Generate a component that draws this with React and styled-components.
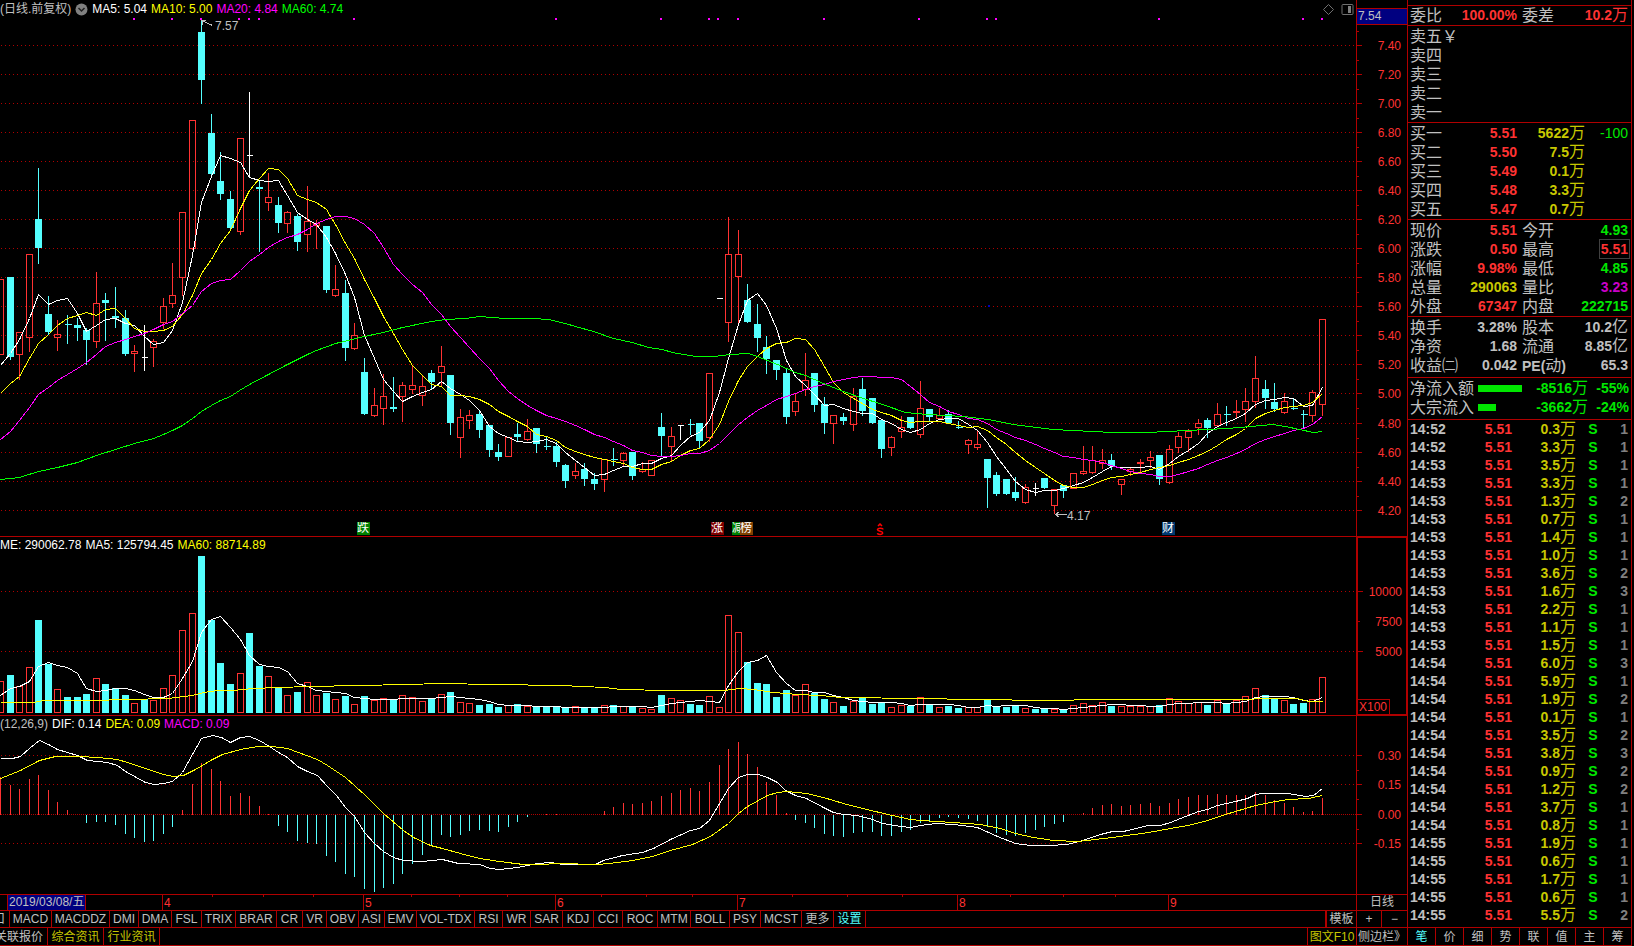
import React from 'react';
import styled, { createGlobalStyle, css } from 'styled-components';

const colors = {
  line: '#b00000',
  red: '#ff3232',
  cyan: '#54ffff',
  yellow: '#ffff00',
  gold: '#c8c800',
  magenta: '#ff00ff',
  purple: '#c800c8',
  green: '#00ff00',
  lime: '#00e600',
  white: '#ffffff',
  gray: '#c0c0c0',
  dim: '#808080',
  navy: '#000080',
  black: '#000000',
};

const GlobalStyle = createGlobalStyle`
  body {
    margin: 0;
    background: ${colors.black};
    color: ${colors.gray};
    font-family: 'Liberation Sans', 'Noto Sans CJK SC', sans-serif;
    font-size: 12px;
  }

  *, *::before, *::after {
    box-sizing: border-box;
  }
`;

/* ---------- data ---------- */

// kind (r up, c down, w flat), high, top, bottom, low
const CANDLES = [
  ['r', 279, 279, 354, 354], ['c', 276, 277, 357, 359], ['r', 332, 332, 354, 379], ['r', 254, 254, 337, 351],
  ['c', 167, 219, 248, 263], ['c', 295, 314, 332, 334], ['r', 319, 334, 337, 350], ['c', 314, 324, 325, 343],
  ['c', 317, 325, 328, 340], ['c', 327, 330, 340, 364], ['r', 271, 303, 341, 347], ['c', 292, 300, 303, 340],
  ['c', 286, 316, 318, 327], ['c', 309, 318, 354, 355], ['r', 344, 351, 353, 371], ['w', 324, 357, 357, 370],
  ['r', 338, 341, 347, 366], ['r', 297, 306, 322, 328], ['r', 262, 295, 303, 307], ['r', 212, 212, 277, 295],
  ['r', 120, 120, 248, 249], ['c', 20, 32, 80, 103], ['c', 113, 133, 174, 174], ['c', 151, 181, 194, 199],
  ['c', 190, 199, 228, 228], ['r', 138, 138, 231, 234], ['w', 91, 155, 155, 176], ['c', 180, 187, 189, 251],
  ['r', 172, 197, 202, 210], ['c', 196, 205, 223, 232], ['r', 210, 212, 223, 232], ['c', 213, 216, 242, 250],
  ['r', 185, 221, 234, 251], ['r', 219, 223, 225, 248], ['c', 226, 226, 290, 292], ['r', 264, 289, 295, 296],
  ['c', 279, 293, 348, 360], ['r', 322, 335, 348, 349], ['c', 357, 372, 414, 414], ['r', 387, 405, 415, 416],
  ['r', 373, 396, 408, 424], ['c', 376, 407, 409, 411], ['r', 381, 385, 396, 421], ['r', 365, 385, 389, 393],
  ['r', 374, 386, 395, 405], ['c', 369, 373, 382, 388], ['r', 345, 366, 372, 385], ['c', 375, 375, 423, 434],
  ['r', 408, 417, 437, 457], ['r', 409, 415, 420, 428], ['c', 410, 414, 430, 437], ['c', 425, 425, 450, 456],
  ['c', 443, 452, 457, 460], ['r', 437, 437, 456, 456], ['c', 422, 434, 437, 440], ['r', 418, 431, 439, 440],
  ['c', 428, 428, 444, 452], ['c', 436, 446, 447, 449], ['c', 441, 446, 462, 466], ['c', 463, 465, 481, 487],
  ['r', 462, 471, 475, 478], ['c', 462, 469, 479, 485], ['c', 472, 479, 484, 489], ['r', 459, 459, 479, 491],
  ['c', 447, 459, 460, 465], ['r', 451, 453, 460, 465], ['c', 452, 452, 476, 479], ['r', 461, 469, 471, 472],
  ['r', 460, 460, 475, 475], ['c', 412, 427, 436, 456], ['r', 426, 436, 446, 460], ['w', 425, 425, 425, 439],
  ['c', 418, 424, 425, 434], ['c', 423, 423, 441, 448], ['r', 373, 373, 437, 441], ['w', 298, 298, 298, 298],
  ['r', 216, 254, 322, 341], ['r', 229, 254, 276, 322], ['c', 283, 300, 322, 322], ['c', 303, 324, 338, 351],
  ['c', 335, 347, 359, 373], ['c', 360, 360, 370, 379], ['c', 368, 373, 417, 423], ['r', 393, 401, 411, 415],
  ['r', 352, 380, 389, 395], ['c', 373, 373, 405, 411], ['c', 396, 404, 423, 433], ['r', 415, 415, 423, 443],
  ['c', 412, 417, 421, 424], ['r', 387, 396, 424, 430], ['c', 377, 389, 411, 415], ['c', 398, 398, 423, 423],
  ['c', 418, 420, 449, 457], ['r', 435, 437, 447, 455], ['r', 415, 427, 431, 437], ['c', 417, 417, 428, 428],
  ['r', 380, 408, 434, 437], ['c', 409, 409, 417, 421], ['r', 407, 415, 418, 419], ['c', 409, 414, 423, 423],
  ['c', 420, 427, 428, 428], ['r', 438, 440, 444, 453], ['r', 430, 444, 447, 449], ['c', 459, 459, 478, 507],
  ['c', 471, 475, 494, 495], ['c', 479, 479, 494, 494], ['c', 476, 492, 498, 500], ['r', 483, 487, 502, 503],
  ['w', 482, 488, 488, 495], ['c', 478, 478, 488, 488], ['r', 489, 489, 505, 513], ['c', 485, 485, 491, 497],
  ['r', 473, 473, 488, 488], ['r', 445, 471, 473, 474], ['r', 445, 460, 472, 473], ['r', 448, 460, 463, 468],
  ['c', 453, 460, 466, 469], ['r', 479, 479, 484, 494], ['r', 466, 469, 471, 475], ['r', 458, 462, 463, 473],
  ['r', 450, 457, 460, 467], ['c', 455, 455, 479, 484], ['r', 444, 449, 482, 483], ['r', 431, 436, 447, 452],
  ['r', 428, 431, 437, 451], ['r', 418, 423, 427, 434], ['c', 417, 420, 428, 437], ['r', 402, 414, 425, 426],
  ['c', 405, 414, 415, 425], ['r', 399, 411, 412, 417], ['r', 387, 401, 409, 421], ['r', 355, 378, 401, 407],
  ['c', 379, 389, 398, 408], ['c', 382, 402, 409, 411], ['r', 392, 401, 412, 413], ['c', 398, 408, 409, 409],
  ['c', 409, 414, 415, 428], ['r', 389, 392, 415, 421], ['r', 319, 319, 404, 415],
];

const VOLUMES = [
  681, 675, 686, 667, 620, 664, 689, 697, 697, 694, 678, 684, 688, 695, 703, 699, 700, 688, 675, 630,
  613, 556, 620, 663, 684, 673, 633, 666, 676, 687, 695, 692, 682, 695, 693, 699, 696, 704, 696, 700,
  698, 699, 695, 697, 701, 698, 694, 692, 702, 703, 705, 704, 707, 705, 704, 706, 707, 707, 707, 707,
  706, 708, 708, 705, 705, 706, 707, 708, 709, 695, 698, 700, 704, 705, 696, 707, 615, 632, 662, 683,
  684, 697, 690, 695, 684, 693, 699, 702, 706, 701, 697, 704, 703, 707, 705, 706, 697, 705, 707, 706,
  708, 707, 707, 699, 707, 707, 706, 708, 709, 709, 709, 709, 705, 703, 705, 702, 706, 706, 706, 706,
  706, 705, 698, 701, 703, 702, 705, 700, 703, 700, 696, 688, 695, 699, 700, 704, 703, 699, 677,
];

// flat days whose volume bar is drawn as a rise
const FLAT_UP = [71, 75];

const MACD = [
  776, 784, 788, 778, 774, 789, 801, 809, 814, 822, 821, 821, 824, 833, 837, 841, 840, 833, 826, 809,
  783, 762, 768, 780, 795, 792, 795, 805, 813, 825, 831, 840, 842, 843, 855, 861, 873, 876, 888, 891,
  887, 883, 873, 863, 854, 845, 834, 836, 834, 830, 829, 830, 831, 826, 821, 816, 814, 813, 813, 814,
  814, 814, 814, 810, 806, 802, 803, 802, 800, 795, 792, 789, 787, 790, 781, 764, 748, 741, 753, 766,
  781, 794, 812, 819, 822, 827, 833, 835, 836, 832, 831, 831, 835, 835, 831, 829, 822, 820, 817, 816,
  817, 818, 820, 826, 832, 834, 835, 832, 829, 826, 823, 821, 814, 812, 807, 804, 803, 805, 804, 803,
  802, 805, 802, 798, 796, 794, 794, 793, 794, 794, 794, 791, 794, 799, 802, 806, 811, 810, 797,
];

const MA60 = '0,479 19,477 38,471 57,467 77,462 96,455 115,449 134,443 153,438 163,434 172,430 182,425 192,418 201,411 211,405 220,400 230,396 239,390 249,384 268,374 287,364 307,354 316,350 335,343 364,336 383,332 402,327 431,321 445,319 465,318 479,316 505,318 532,318 548,319 565,323 575,326 593,331 613,338 632,342 648,347 662,349 672,352 695,356 713,356 730,354 748,353 757,356 777,364 795,372 805,375 823,383 843,391 860,397 882,404 905,412 927,414 963,416 988,419 1013,424 1052,429 1113,432 1147,432 1187,430 1227,428 1250,426 1272,424 1285,426 1313,432 1322,431';

const VOL_MA60 = '0,702 33,702 43,700 90,700 128,699 167,698 192,695 203,692 217,690 233,690 253,688 277,687 310,686 358,685 407,684 440,683 493,684 560,685 605,687 620,689 667,690 723,690 740,688 753,689 773,692 797,694 820,695 840,697 920,698 972,699 1050,700 1097,699 1240,699 1267,698 1297,698 1308,701 1322,701';

const DIF = '0,758 12,758 20,756 30,747 39,740 48,744 57,749 77,755 87,760 107,762 117,765 125,771 145,782 154,784 163,783 172,781 182,772 192,754 201,738 212,735 221,737 230,742 240,737 249,736 259,740 269,746 278,752 287,757 297,766 307,771 317,775 327,786 336,795 345,807 354,816 364,832 374,843 383,851 393,857 403,860 422,861 442,859 458,863 460,863 479,864 490,868 499,869 517,867 537,863 550,862 563,864 595,864 603,860 622,855 642,852 653,848 670,839 690,830 699,828 709,820 718,805 728,788 738,777 747,774 758,774 767,777 777,782 785,790 795,795 806,798 823,807 833,812 843,814 857,815 872,819 882,823 900,826 910,827 920,825 935,823 953,824 977,827 997,836 1015,843 1030,845 1048,845 1067,844 1082,840 1100,834 1112,831 1123,831 1148,825 1160,825 1170,822 1180,818 1198,811 1207,809 1217,805 1235,801 1247,798 1255,794 1263,793 1288,793 1305,796 1313,795 1322,788';

const DEA = '0,778 20,770 39,760 55,756 80,756 97,757 117,759 127,762 145,768 163,774 173,776 183,775 193,770 202,765 212,759 222,754 240,749 257,746 272,746 287,748 298,752 317,759 327,765 345,777 365,795 383,813 403,830 413,837 430,845 442,848 460,853 479,858 499,861 523,864 540,864 557,863 598,864 617,862 632,860 652,856 670,850 692,844 710,836 728,823 738,813 747,806 767,795 777,792 787,791 806,793 823,797 843,803 862,808 892,815 910,819 920,820 953,822 980,824 1000,828 1015,833 1033,837 1053,840 1077,841 1112,837 1148,832 1170,828 1188,825 1207,820 1225,814 1255,805 1270,802 1288,799 1308,798 1322,795';

const SIGNALS = [134, 172, 201, 239, 249, 259, 354, 556, 661, 709, 718, 738, 824, 919, 987, 996, 1159, 1303, 1322];

const PRICE_TICKS = [
  [45, '7.40'], [74, '7.20'], [103, '7.00'], [132, '6.80'], [161, '6.60'], [190, '6.40'],
  [219, '6.20'], [248, '6.00'], [277, '5.80'], [306, '5.60'], [335, '5.40'], [364, '5.20'],
  [393, '5.00'], [423, '4.80'], [452, '4.60'], [481, '4.40'], [510, '4.20'],
];
const VOLUME_TICKS = [[591, '10000'], [621, '7500', true], [651, '5000']];
const MACD_TICKS = [[755, '0.30'], [784, '0.15'], [814, '0.00'], [843, '-0.15']];

const MONTHS = [[162, '4'], [363, '5'], [555, '6'], [737, '7'], [957, '8'], [1168, '9']];
const WEEKS = [212, 263, 313, 411, 459, 507, 601, 646, 692, 792, 847, 902, 1010, 1063, 1115];

const INDICATORS = [
  ['口', 10], ['MACD', 42], ['MACDDZ', 58], ['DMI', 29], ['DMA', 33], ['FSL', 30], ['TRIX', 34],
  ['BRAR', 41], ['CR', 26], ['VR', 24], ['OBV', 32], ['ASI', 26], ['EMV', 32], ['VOL-TDX', 58],
  ['RSI', 28], ['WR', 28], ['SAR', 32], ['KDJ', 31], ['CCI', 29], ['ROC', 35], ['MTM', 33],
  ['BOLL', 39], ['PSY', 31], ['MCST', 41], ['更多', 32], ['设置', 32],
];

const ASKS = ['卖五￥', '卖四', '卖三', '卖二', '卖一'];
const BIDS = [
  ['买一', '5.51', '5622万', '-100'],
  ['买二', '5.50', '7.5万'],
  ['买三', '5.49', '0.1万'],
  ['买四', '5.48', '3.3万'],
  ['买五', '5.47', '0.7万'],
];

const QUOTES = [
  ['现价', '5.51', 'red', '今开', '4.93', 'lime'],
  ['涨跌', '0.50', 'red', '最高', '5.51', 'red', true],
  ['涨幅', '9.98%', 'red', '最低', '4.85', 'lime'],
  ['总量', '290063', 'gold', '量比', '3.23', 'purple'],
  ['外盘', '67347', 'red', '内盘', '222715', 'lime'],
];

const FINANCE = [
  ['换手', '3.28%', 'gray', '股本', '10.2亿', 'gray'],
  ['净资', '1.68', 'gray', '流通', '8.85亿', 'gray'],
  ['收益㈡', '0.042', 'gray', 'PE(动)', '65.3', 'gray'],
];

const FLOWS = [
  ['净流入额', 44, '-8516万', '-55%'],
  ['大宗流入', 18, '-3662万', '-24%'],
];

const TRADES = [
  ['14:52', '0.3', 1], ['14:52', '3.3', 1], ['14:53', '3.5', 1], ['14:53', '3.3', 1], ['14:53', '1.3', 2],
  ['14:53', '0.7', 1], ['14:53', '1.4', 1], ['14:53', '1.0', 1], ['14:53', '3.6', 2], ['14:53', '1.6', 3],
  ['14:53', '2.2', 1], ['14:53', '1.1', 1], ['14:53', '1.5', 1], ['14:54', '6.0', 3], ['14:54', '5.9', 1],
  ['14:54', '1.9', 2], ['14:54', '0.1', 1], ['14:54', '3.5', 2], ['14:54', '3.8', 3], ['14:54', '0.9', 2],
  ['14:54', '1.2', 2], ['14:54', '3.7', 1], ['14:54', '0.8', 1], ['14:55', '1.9', 1], ['14:55', '0.6', 1],
  ['14:55', '1.7', 1], ['14:55', '0.6', 1], ['14:55', '5.5', 2],
];

const SIDE_TABS = ['笔', '价', '细', '势', '联', '值', '主', '筹'];

/* ---------- chart helpers ---------- */

const PLOT_WIDTH = 1356;
const STEP = 9.58;
const xOf = (i) => Math.round(i * STEP);
const percent = (x) => `${(x / PLOT_WIDTH) * 100}%`;

// moving average; `lead` holds the values before a full window is available
function averageLine(values, size, lead) {
  return values
    .map((_, i) => {
      if (i < size - 1) return `${xOf(i)},${lead[i]}`;
      const sum = values.slice(i - size + 1, i + 1).reduce((a, b) => a + b, 0);
      return `${xOf(i)},${Math.round(sum / size)}`;
    })
    .join(' ');
}

const closes = CANDLES.map(([kind, , top, bottom]) => (kind === 'c' ? bottom - 1 : top));
const MA5 = averageLine(closes, 5, [365, 353, 339, 318]);
const MA10 = averageLine(closes, 10, [393, 383, 376, 358, 343, 334, 325, 318, 315]);
const MA20 = averageLine(closes, 20, [
  439, 431, 420, 407, 394, 387, 380, 374, 368, 362, 354, 346, 342, 339, 336, 333, 329, 324, 321,
]);
const VOL_MA5 = averageLine(VOLUMES, 5, [695, 688, 686, 681]);

/* ---------- layout ---------- */

const Page = styled.div`
  display: flex;
  align-items: stretch;
  border-bottom: 1px solid #e8e8e8;
  line-height: 16px;
`;

const Main = styled.main`
  flex: 1;
  min-width: 0;
`;

const Row = styled.section`
  display: flex;
  border-bottom: 1px solid ${colors.line};
`;

const Plot = styled.div`
  position: relative;
  flex: 1;
  min-width: 0;
`;

const Svg = styled.svg`
  display: block;
  width: 100%;
  shape-rendering: crispEdges;
`;

const Axis = styled.div`
  display: flex;
  flex-direction: column;
  flex: 0 0 51px;
  border-left: 1px solid ${colors.line};

  ${({ $selected }) => $selected && css`
    border: 1px solid ${colors.line};
    border-left-width: 2px;
  `}

  text {
    fill: ${colors.red};
    font-size: 12px;
    text-anchor: end;
  }
`;

const LastPrice = styled.div`
  margin-top: 8px;
  height: 17px;
  padding-left: 1px;
  border: solid ${colors.line};
  border-width: 1px 0;
  background: ${colors.navy};
  line-height: 15px;
`;

const UnitBox = styled.div`
  width: 32px;
  height: 15px;
  margin-top: auto;
  padding-left: 1px;
  border: solid ${colors.line};
  border-width: 1px 1px 0 0;
  color: ${colors.red};
  line-height: 15px;
`;

const Legend = styled.header`
  display: flex;
  align-items: center;
  gap: 4px;
  height: ${({ $height }) => $height}px;
  overflow: hidden;
  white-space: nowrap;
`;

const LegendItem = styled.span`
  color: ${({ $color }) => colors[$color]};
`;

const IconButton = styled.button`
  display: flex;
  padding: 0;
  border: 0;
  background: none;
`;

const LegendTools = styled.div`
  display: flex;
  gap: 6px;
  margin-left: auto;
  padding-right: 2px;
`;

const Note = styled.span`
  position: absolute;
  line-height: 14px;
`;

const Badge = styled(Note)`
  width: ${({ $width = 13 }) => $width}px;
  height: 13px;
  overflow: hidden;
  background: ${({ $color }) => $color};
  color: ${colors.white};
  font-size: 12px;
  line-height: 13px;
`;

const DateStrip = styled(Plot)`
  height: 15px;
  color: ${colors.red};
`;

const DateBox = styled.time`
  position: absolute;
  left: 7px;
  top: 0;
  height: 15px;
  padding: 0 1px;
  border: solid ${colors.line};
  border-width: 0 1px;
  background: ${colors.navy};
  color: ${colors.gray};
  line-height: 15px;
  white-space: nowrap;
`;

const PeriodCell = styled.div`
  flex: 0 0 51px;
  border-left: 1px solid ${colors.line};
  line-height: 15px;
  text-align: center;
`;

const Bar = styled.nav`
  display: flex;
  height: ${({ $height }) => $height}px;
  border-bottom: 1px solid ${colors.line};
  overflow: hidden;
`;

const BarButton = styled.button`
  display: flex;
  flex: 0 0 ${({ $width }) => $width}px;
  align-items: center;
  justify-content: ${({ $cut }) => ($cut ? 'flex-end' : 'center')};
  padding: 0 ${({ $cut }) => ($cut ? '4px' : '0')} 0 0;
  border: solid ${colors.line};
  border-width: 0 1px 0 0;
  overflow: hidden;
  background: none;
  color: ${({ $color = 'gray' }) => colors[$color]};
  font: inherit;
  white-space: nowrap;
`;

const EdgeButton = styled(BarButton)`
  border-width: 0 0 0 ${({ $thick }) => ($thick ? 2 : 1)}px;
`;

const Spacer = styled.div`
  flex: 1;
`;

const Sidebar = styled.aside`
  display: flex;
  flex-direction: column;
  flex: 0 0 225px;
  margin-right: 2px;
  padding-top: 5px;
  border: solid ${colors.line};
  border-width: 0 1px;
`;

const Block = styled.section`
  padding: ${({ $pad = '1px 3px 0 2px' }) => $pad};
  border-top: 1px solid ${colors.line};
`;

const Num = styled.span`
  color: ${({ $color = 'gray' }) => colors[$color]};
  font-size: 14px;
  font-weight: ${({ $thin }) => ($thin ? 400 : 700)};
  white-space: nowrap;

  ${({ $boxed }) => $boxed && css`
    outline: 1px solid #404040;
    outline-offset: 1px;
  `}
`;

const Unit = styled.span`
  font-size: 16px;
  font-weight: 400;
  line-height: 1;
`;

const Pairs = styled.dl`
  display: grid;
  grid-template-columns: 107fr 106fr;
  column-gap: 5px;
  margin: 0;
`;

const Pair = styled.div`
  display: flex;
  align-items: center;
  justify-content: space-between;
  height: 19px;

  dt {
    font-size: 16px;
    line-height: 19px;
    white-space: nowrap;
  }

  dd {
    margin: 0;
    line-height: 19px;
  }
`;

const Table = styled.table`
  width: 100%;
  table-layout: fixed;
  border-collapse: collapse;

  tr {
    height: ${({ $row }) => $row}px;
  }

  th,
  td {
    padding: 0;
    line-height: ${({ $row }) => $row - 1}px;
    text-align: right;
    white-space: nowrap;
  }

  th {
    font-size: 16px;
    font-weight: 400;
    text-align: left;
  }
`;

const TimeCell = styled.td`
  && {
    text-align: left;
  }
`;

const SideCell = styled.td`
  && {
    text-align: center;
  }
`;

const FlowRow = styled.div`
  display: grid;
  grid-template-columns: 68px 44px 1fr 41px;
  align-items: center;
  height: 19px;
  line-height: 19px;
  text-align: right;
`;

const FlowLabel = styled.span`
  font-size: 16px;
  text-align: left;
`;

const FlowBar = styled.span`
  height: 7px;
  background: ${colors.lime};
`;

const SideTabs = styled.nav`
  display: flex;
  flex: 1;
  border: solid ${colors.line};
  border-width: 1px 0;
`;

const SideTab = styled.button`
  flex: 1;
  padding: 0;
  border: solid ${colors.line};
  border-width: 0 0 0 1px;
  background: none;
  color: ${({ $active }) => ($active ? colors.cyan : colors.gray)};
  font: inherit;

  &:first-child {
    border-left: 0;
  }
`;

/* ---------- parts ---------- */

function Value({ text, ...rest }) {
  const [, number, unit] = text.match(/^(.*?)([万亿]?)$/);
  return (
    <Num {...rest}>
      {number}
      {unit && <Unit>{unit}</Unit>}
    </Num>
  );
}

function GridLines({ ticks, dense }) {
  return ticks.map(([y]) => (
    <line key={y} x1="1" x2={PLOT_WIDTH} y1={y + 0.5} y2={y + 0.5} stroke={colors.line}
      strokeDasharray={y === dense ? '1 1' : '1 3'} />
  ));
}

function Line({ points, color }) {
  return <polyline points={points} fill="none" stroke={colors[color]} />;
}

function Candle({ index, data: [kind, high, top, bottom, low] }) {
  const x = xOf(index);
  if (kind === 'w') {
    return <path d={`M${x - 3} ${top}h6M${x} ${high}V${low}`} stroke={colors.white} />;
  }
  const color = kind === 'r' ? colors.red : colors.cyan;
  const end = kind === 'r' ? bottom : bottom - 1;
  return (
    <g stroke={color}>
      <path d={`M${x} ${high}V${top}M${x} ${end}V${low}`} />
      {end > top
        ? <rect x={x - 3} y={top} width="6" height={end - top} fill={kind === 'r' ? 'none' : color} />
        : <path d={`M${x - 3} ${top}h7`} />}
    </g>
  );
}

function VolumeBar({ index, top }) {
  const up = CANDLES[index][0] === 'r' || FLAT_UP.includes(index);
  return (
    <rect x={xOf(index) - 3} y={top} width="6" height={712 - top}
      stroke={up ? colors.red : colors.cyan} fill={up ? 'none' : colors.cyan} />
  );
}

function AxisTicks({ ticks, top, height, minor, width = 50 }) {
  return (
    <Svg viewBox={`0 ${top} ${width} ${height}`} height={height}>
      {minor.map((y) => <path key={y} d={`M0 ${y + 0.5}h2`} stroke={colors.line} />)}
      {ticks.map(([y, label, small]) => (
        <g key={label}>
          <path d={`M0 ${y + 0.5}h${small ? 2 : 5}`} stroke={colors.line} />
          <text x={44} y={y + 5}>{label}</text>
        </g>
      ))}
    </Svg>
  );
}

function PricePanel() {
  return (
    <Row>
      <Plot>
        <Legend $height={18}>
          <LegendItem $color="gray">(日线.前复权)</LegendItem>
          <IconButton type="button" aria-label="指标选项">
            <svg width="13" height="13" viewBox="0 0 13 13">
              <circle cx="6.5" cy="6.5" r="6" fill="#808080" />
              <path d="M3.5 5l3 3 3-3" fill="none" stroke="#202020" strokeWidth="1.5" />
            </svg>
          </IconButton>
          <LegendItem $color="white">MA5: 5.04</LegendItem>
          <LegendItem $color="yellow">MA10: 5.00</LegendItem>
          <LegendItem $color="magenta">MA20: 4.84</LegendItem>
          <LegendItem $color="green">MA60: 4.74</LegendItem>
          <LegendTools>
            <IconButton type="button" aria-label="标记">
              <svg width="13" height="13" viewBox="0 0 13 13" fill="none" stroke="#707070">
                <path d="M6.5 1.5l5 5-5 5-5-5z" />
              </svg>
            </IconButton>
            <IconButton type="button" aria-label="侧栏">
              <svg width="13" height="13" viewBox="0 0 13 13">
                <rect x="1" y="1.5" width="11" height="10" rx="1" fill="none" stroke="#707070" />
                <path d="M7 3h3v7h-3z" fill="#808080" />
              </svg>
            </IconButton>
          </LegendTools>
        </Legend>
        <Svg viewBox={`0 18 ${PLOT_WIDTH} 518`} height="518" preserveAspectRatio="none">
          <GridLines ticks={PRICE_TICKS} />
          {SIGNALS.map((x) => <rect key={x} x={x - 1} y="18" width="2" height="2" fill={colors.magenta} />)}
          <rect x="988" y="305" width="2" height="2" fill="#0000c0" />
          <g transform="translate(.5 .5)">
            {CANDLES.map((data, i) => <Candle key={i} index={i} data={data} />)}
            <Line points={MA5} color="white" />
            <Line points={MA10} color="yellow" />
            <Line points={MA20} color="magenta" />
            <Line points={MA60} color="green" />
            <path d="M201 20l11 5M201 20h4M202 20v4M1055 514h11M1055 514l4-3M1055 514l4 3"
              fill="none" stroke={colors.gray} />
          </g>
        </Svg>
        <Note style={{ left: percent(215), top: 19 }}>7.57</Note>
        <Note style={{ left: percent(1067), top: 509 }}>4.17</Note>
        <Badge $color="#008000" style={{ left: percent(357), top: 522 }}>跌</Badge>
        <Badge $color="#800000" style={{ left: percent(711), top: 522 }}>涨</Badge>
        <Badge $color="#008000" $width={8} style={{ left: percent(732), top: 522 }}>减</Badge>
        <Badge $color="#804000" style={{ left: percent(740), top: 522 }}>榜</Badge>
        <Badge $color="#003870" style={{ left: percent(1162), top: 522 }}>财</Badge>
        <Note style={{ left: percent(876), top: 523, color: '#ff0000' }}>
          <svg width="8" height="13" viewBox="0 0 8 13" fill="none" stroke="currentColor" strokeWidth="1.5">
            <path d="M2 3l2-2 2 2M7 6.500c0-1.500-5-2-5.500 0s5.500 1.500 5.200 3.500-5 1.800-5.200.2" />
          </svg>
        </Note>
      </Plot>
      <Axis>
        <LastPrice>7.54</LastPrice>
        <AxisTicks ticks={PRICE_TICKS} top={25} height={511}
          minor={[31, 60, 89, 118, 147, 176, 205, 234, 263, 292, 321, 350, 379, 408, 438, 467, 496]} />
      </Axis>
    </Row>
  );
}

function VolumePanel() {
  return (
    <Row>
      <Plot>
        <Legend $height={16}>
          <LegendItem $color="white">ME: 290062.78</LegendItem>
          <LegendItem $color="white">MA5: 125794.45</LegendItem>
          <LegendItem $color="yellow">MA60: 88714.89</LegendItem>
        </Legend>
        <Svg viewBox={`0 553 ${PLOT_WIDTH} 162`} height="162" preserveAspectRatio="none">
          <GridLines ticks={VOLUME_TICKS.filter(([, , small]) => !small)} />
          <g transform="translate(.5 .5)">
            {VOLUMES.map((top, i) => <VolumeBar key={i} index={i} top={top} />)}
            <Line points={VOL_MA5} color="white" />
            <Line points={VOL_MA60} color="yellow" />
          </g>
        </Svg>
      </Plot>
      <Axis $selected>
        <AxisTicks ticks={VOLUME_TICKS} top={538} height={161} minor={[]} width={48} />
        <UnitBox>X100</UnitBox>
      </Axis>
    </Row>
  );
}

function MacdPanel() {
  return (
    <Row>
      <Plot>
        <Legend $height={16}>
          <LegendItem $color="gray">(12,26,9)</LegendItem>
          <LegendItem $color="white">DIF: 0.14</LegendItem>
          <LegendItem $color="yellow">DEA: 0.09</LegendItem>
          <LegendItem $color="magenta">MACD: 0.09</LegendItem>
        </Legend>
        <Svg viewBox={`0 732 ${PLOT_WIDTH} 162`} height="162" preserveAspectRatio="none">
          <GridLines ticks={MACD_TICKS} dense={814} />
          <g transform="translate(.5 .5)">
            {MACD.map((y, i) => (
              <path key={i} d={`M${xOf(i)} 814V${y}`} stroke={y < 814 ? colors.red : colors.cyan} />
            ))}
            <Line points={DIF} color="white" />
            <Line points={DEA} color="yellow" />
          </g>
        </Svg>
      </Plot>
      <Axis>
        <AxisTicks ticks={MACD_TICKS} top={716} height={178} minor={[770, 799, 829]} />
      </Axis>
    </Row>
  );
}

function DateRow() {
  return (
    <Row>
      <DateStrip>
        <Svg viewBox={`0 0 ${PLOT_WIDTH} 15`} height="15" preserveAspectRatio="none" stroke={colors.line}>
          {MONTHS.map(([x]) => <path key={x} d={`M${x + 0.5} 0v15`} />)}
          {WEEKS.map((x) => <path key={x} d={`M${x + 0.5} 0v2`} />)}
        </Svg>
        <DateBox dateTime="2019-03-08">2019/03/08/五</DateBox>
        {MONTHS.map(([x, label]) => (
          <Note key={label} style={{ left: percent(x + 2), top: 1 }}>{label}</Note>
        ))}
      </DateStrip>
      <PeriodCell>日线</PeriodCell>
    </Row>
  );
}

function Pairing({ rows }) {
  return (
    <Pairs>
      {rows.map(([a, av, ac, b, bv, bc, boxed]) => (
        <React.Fragment key={a}>
          <Pair>
            <dt>{a}</dt>
            <dd><Value text={av} $color={ac} /></dd>
          </Pair>
          <Pair>
            <dt>{b.startsWith('PE') ? <Num>PE(<Unit>动</Unit>)</Num> : b}</dt>
            <dd><Value text={bv} $color={bc} $boxed={boxed} /></dd>
          </Pair>
        </React.Fragment>
      ))}
    </Pairs>
  );
}

function QuotePanel() {
  return (
    <Sidebar>
      <Block $pad="0 3px 0 2px">
        <Pairing rows={[['委比', '100.00%', 'red', '委差', '10.2万', 'red']]} />
      </Block>
      <Block>
        <Table $row={19}>
          <tbody>
            {ASKS.map((label) => <tr key={label}><th scope="row">{label}</th></tr>)}
          </tbody>
        </Table>
      </Block>
      <Block>
        <Table $row={19}>
          <colgroup>
            <col width="48" /><col width="59" /><col width="68" /><col width="43" />
          </colgroup>
          <tbody>
            {BIDS.map(([label, price, amount, change]) => (
              <tr key={label}>
                <th scope="row">{label}</th>
                <td><Value text={price} $color="red" /></td>
                <td><Value text={amount} $color="gold" /></td>
                <td>{change && <Value text={change} $color="lime" $thin />}</td>
              </tr>
            ))}
          </tbody>
        </Table>
      </Block>
      <Block>
        <Pairing rows={QUOTES} />
      </Block>
      <Block $pad="1px 3px 2px 2px">
        <Pairing rows={FINANCE} />
      </Block>
      <Block $pad="1px 2px 2px 2px">
        {FLOWS.map(([label, width, amount, share]) => (
          <FlowRow key={label}>
            <FlowLabel>{label}</FlowLabel>
            <FlowBar style={{ width }} />
            <Value text={amount} $color="lime" />
            <Value text={share} $color="lime" />
          </FlowRow>
        ))}
      </Block>
      <Block $pad="1px 3px 2px 2px">
        <Table $row={18}>
          <colgroup>
            <col width="42" /><col width="60" /><col width="64" /><col width="34" /><col width="18" />
          </colgroup>
          <tbody>
            {TRADES.map(([time, amount, count], i) => (
              <tr key={i}>
                <TimeCell><Num as="time">{time}</Num></TimeCell>
                <td><Value text="5.51" $color="red" /></td>
                <td><Value text={`${amount}万`} $color="gold" /></td>
                <SideCell><Value text="S" $color="lime" /></SideCell>
                <td><Value text={String(count)} $color="dim" /></td>
              </tr>
            ))}
          </tbody>
        </Table>
      </Block>
      <SideTabs>
        {SIDE_TABS.map((label, i) => (
          <SideTab key={label} type="button" $active={i === 0}>{label}</SideTab>
        ))}
      </SideTabs>
    </Sidebar>
  );
}

export default function App() {
  return (
    <>
      <GlobalStyle />
      <Page>
        <Main>
          <PricePanel />
          <VolumePanel />
          <MacdPanel />
          <DateRow />
          <Bar $height={17}>
            {INDICATORS.map(([label, width], i) => (
              <BarButton key={label} type="button" $width={width} $cut={i === 0}
                $color={label === '设置' ? 'cyan' : 'gray'}>
                {label}
              </BarButton>
            ))}
            <Spacer />
            <EdgeButton type="button" $width={31} $thick>模板</EdgeButton>
            <EdgeButton type="button" $width={25}>+</EdgeButton>
            <EdgeButton type="button" $width={26}>−</EdgeButton>
          </Bar>
          <Bar $height={18}>
            <BarButton type="button" $width={48} $cut>关联报价</BarButton>
            <BarButton type="button" $width={56} $color="gold">综合资讯</BarButton>
            <BarButton type="button" $width={56} $color="gold">行业资讯</BarButton>
            <Spacer />
            <EdgeButton type="button" $width={49} $color="gold">图文F10</EdgeButton>
            <EdgeButton type="button" $width={51}>侧边栏》</EdgeButton>
          </Bar>
        </Main>
        <QuotePanel />
      </Page>
    </>
  );
}
